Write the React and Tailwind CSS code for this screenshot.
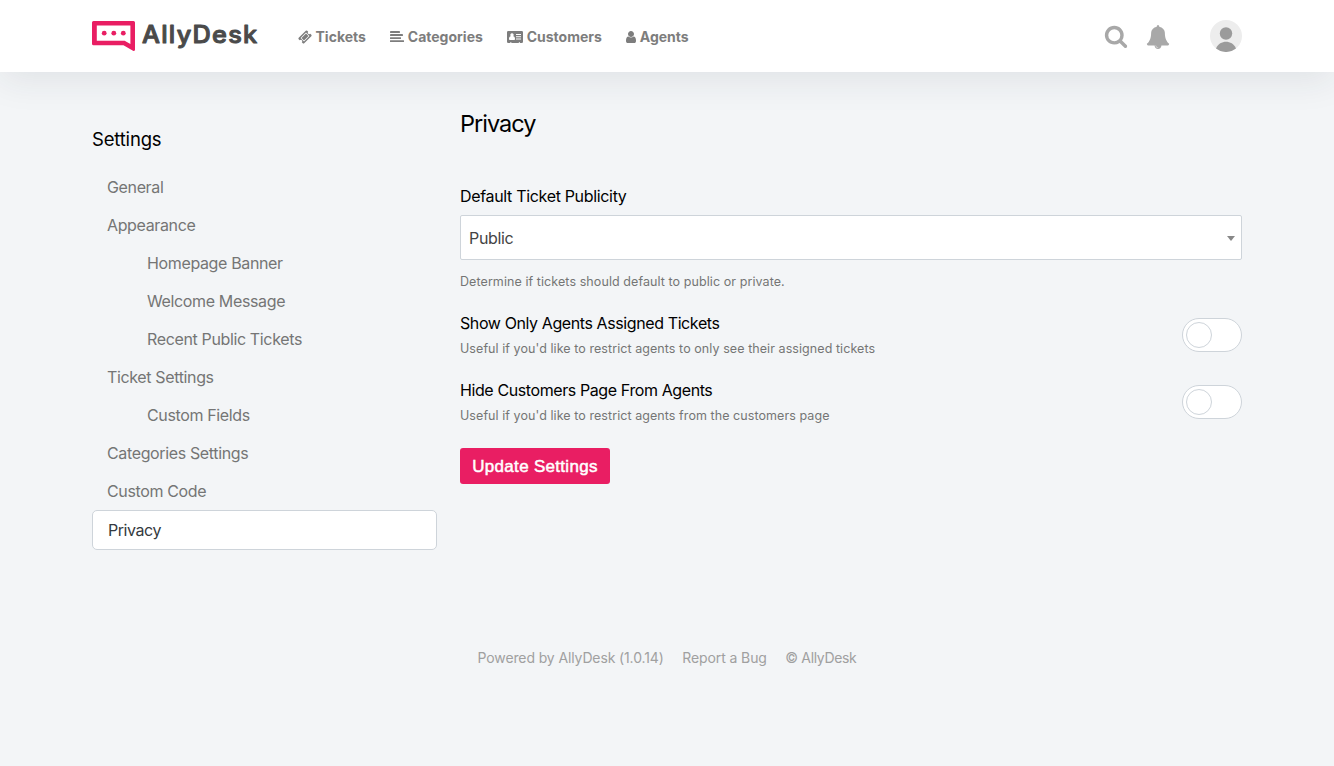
import React from "react";

const PATHS = {
  search:
    "M1216 832q0-185-131.5-316.5t-316.5-131.5-316.5 131.5-131.5 316.5 131.5 316.5 316.5 131.5 316.5-131.5 131.5-316.5zm512 832q0 52-38 90t-90 38q-54 0-90-38l-343-342q-179 124-399 124-143 0-273.5-55.5t-225-150-150-225-55.5-273.5 55.5-273.5 150-225 225-150 273.5-55.5 273.5 55.5 225 150 150 225 55.5 273.5q0 220-124 399l343 343q37 37 37 90z",
  bell: "M912 1696q0-16-16-16-59 0-101.5-42.5t-42.5-101.5q0-16-16-16t-16 16q0 73 51.5 124.5t124.5 51.5q16 0 16-16zm816-288q0 52-38 90t-90 38h-448q0 106-75 181t-181 75-181-75-75-181h-448q-52 0-90-38t-38-90q50-42 91-88t85-119.5 74.5-158.5 50-206 19.5-260q0-152 117-282.5t307-158.5q-8-19-8-39 0-40 28-68t68-28 68 28 28 68q0 20-8 39 190 28 307 158.5t117 282.5q0 139 19.5 260t50 206 74.5 158.5 85 119.5 91 88z",
  ticket:
    "M1024 452l316 316-572 572-316-316zm-211 979l618-618q19-19 19-45t-19-45l-362-362q-18-18-45-18t-45 18l-618 618q-19 19-19 45t19 45l362 362q18 18 45 18t45-18zm889-637l-907 908q-37 37-90.5 37t-90.5-37l-126-126q56-56 56-136t-56-136-136-56-136 56l-125-126q-37-37-37-90.5t37-90.5l907-906q37-37 90.5-37t90.5 37l125 125q-56 56-56 136t56 136 136 56 136-56l126 125q37 37 37 90.5t-37 90.5z",
  user: "M1536 1399q0 109-62.5 187t-150.5 78h-854q-88 0-150.5-78t-62.5-187q0-85 8.5-160.5t31.5-152 58.5-131 94-89 134.5-34.5q131 128 313 128t313-128q76 0 134.5 34.5t94 89 58.5 131 31.5 152 8.5 160.5zm-256-887q0 159-112.5 271.5t-271.5 112.5-271.5-112.5-112.5-271.5 112.5-271.5 271.5-112.5 271.5 112.5 112.5 271.5z",
};

function Logo() {
  return (
    <svg width="170" height="40" viewBox="0 0 170 40" className="block overflow-visible">
      <path
        fillRule="evenodd"
        fill="#e91e63"
        d="M1.5 5H41.5A1.5 1.5 0 0 1 43 6.5V33.6Q43 35.7 41 34.8L31.5 29.3H1.5A1.5 1.5 0 0 1 0 27.8V6.5A1.5 1.5 0 0 1 1.5 5ZM4.8 9.5V24.8H32.6L38.4 28V9.5Z"
      />
      <g fill="#e91e63">
        <circle cx="12.2" cy="17.2" r="2.4" />
        <circle cx="21.8" cy="17.2" r="2.4" />
        <circle cx="31.3" cy="17.2" r="2.4" />
      </g>
      <text
        x="50"
        y="27.2"
        textLength="116.5"
        lengthAdjust="spacingAndGlyphs"
        letterSpacing="1.2"
        fontFamily="Inter, sans-serif"
        fontWeight="500"
        fontSize="24"
        fill="#4a4a4a"
        stroke="#4a4a4a"
        strokeWidth="1"
        strokeLinejoin="round"
      >
        AllyDesk
      </text>
    </svg>
  );
}

const NAV = [
  {
    label: "Tickets",
    icon: (
      <svg width="14" height="14" viewBox="0 0 1792 1792" fill="currentColor">
        <path d={PATHS.ticket} />
      </svg>
    ),
  },
  {
    label: "Categories",
    icon: (
      <svg width="14" height="14" viewBox="0 0 14 14" fill="currentColor">
        <rect x="0" y="1" width="10" height="1.9" rx="0.4" />
        <rect x="0" y="4.1" width="13" height="1.9" rx="0.4" />
        <rect x="0" y="7.2" width="11" height="1.9" rx="0.4" />
        <rect x="0" y="10.2" width="14" height="1.9" rx="0.4" />
      </svg>
    ),
  },
  {
    label: "Customers",
    icon: (
      <svg width="16" height="14" viewBox="0 0 16 14" fill="currentColor">
        <path
          fillRule="evenodd"
          d="M1.2 1H14.8A1.2 1.2 0 0 1 16 2.2V11.8A1.2 1.2 0 0 1 14.8 13H13V12.3H11.8V13H4.4V12.3H3.2V13H1.2A1.2 1.2 0 0 1 0 11.8V2.2A1.2 1.2 0 0 1 1.2 1ZM5 3.2A1.6 1.75 0 0 0 3.8 6.2C2.4 6.4 2 7.6 2 9Q2 10 2.8 10H7.2Q8 10 8 9C8 7.6 7.6 6.4 6.2 6.2A1.6 1.75 0 0 0 5 3.2ZM9 4V5H14V4ZM9 6.2V7.2H14V6.2ZM9 8.5V9.5H14V8.5Z"
        />
      </svg>
    ),
  },
  {
    label: "Agents",
    icon: (
      <svg width="10" height="14" viewBox="256 0 1280 1792" fill="currentColor">
        <path d={PATHS.user} />
      </svg>
    ),
  },
];

const MENU = [
  { label: "General" },
  { label: "Appearance" },
  { label: "Homepage Banner", nested: true },
  { label: "Welcome Message", nested: true },
  { label: "Recent Public Tickets", nested: true },
  { label: "Ticket Settings" },
  { label: "Custom Fields", nested: true },
  { label: "Categories Settings" },
  { label: "Custom Code" },
];

function Header() {
  return (
    <header className="relative h-[72px] bg-white shadow-[0_8px_36px_rgba(35,45,60,0.09)]">
      <div className="mx-auto flex h-full w-[1150px] items-center">
        <Logo />
        <nav className="ml-9 flex items-center gap-[24.4px] pt-0.5 text-sm leading-5 font-bold text-[#7d7d7d]">
          {NAV.map((item) => (
            <a key={item.label} className="flex items-center gap-[3.5px]">
              {item.icon}
              <span>{item.label}</span>
            </a>
          ))}
        </nav>
        <div className="ml-auto flex items-center text-[#a8a8a8]">
          <svg width="24" height="24" viewBox="0 0 1792 1792" fill="currentColor" className="mr-[18.5px]">
            <path d={PATHS.search} />
          </svg>
          <svg width="24" height="24" viewBox="0 0 1792 1792" fill="currentColor" className="mr-10 translate-y-px">
            <path d={PATHS.bell} />
          </svg>
          <svg width="32" height="32" viewBox="0 0 32 32">
            <circle cx="16" cy="16" r="16" fill="#ededed" />
            <circle cx="16" cy="13.5" r="6.2" fill="#9b9b9b" />
            <path d="M6 28.5C8 23.8 12 21.8 16 21.8S24 23.8 26 28.5A16 16 0 0 1 6 28.5Z" fill="#9b9b9b" />
          </svg>
        </div>
      </div>
    </header>
  );
}

function Toggle() {
  return (
    <div className="flex h-[34px] w-[60px] items-center rounded-full border border-[#ced4da] bg-white px-[3px]">
      <div className="size-[26px] rounded-full border border-[#ced4da] bg-white" />
    </div>
  );
}

function ToggleRow({ title, hint }) {
  return (
    <div className="flex h-[67px] justify-between">
      <div>
        <div className="text-base leading-6 tracking-[-0.4px] text-black">{title}</div>
        <div className="mt-1 text-[12.5px] leading-5 tracking-[0.07px] text-[#757575]">{hint}</div>
      </div>
      <div className="pt-[7px]">
        <Toggle />
      </div>
    </div>
  );
}

export default function App() {
  return (
    <div className="min-h-screen bg-[#f3f5f7] font-['Inter',sans-serif]">
      <Header />
      <main className="mx-auto flex w-[1150px] gap-[23px]">
        <aside className="w-[345px] pt-[54px]">
          <h2 className="mb-[15px] text-[18.5px] leading-[27px] tracking-[-0.18px] text-black">Settings</h2>
          <ul className="text-base tracking-[-0.36px] text-[#757575]">
            {MENU.map((item) => (
              <li
                key={item.label}
                className={item.nested ? "flex h-[38px] items-center pl-[55px]" : "flex h-[38px] items-center pl-[15px]"}
              >
                {item.label}
              </li>
            ))}
            <li className="flex h-10 items-center rounded-[5px] border border-[#ced4da] bg-white pl-[15px] tracking-[-0.45px] text-[#343a40]">
              Privacy
            </li>
          </ul>
        </aside>
        <section className="w-[782px] pt-9">
          <h1 className="text-[23.5px] leading-8 tracking-[-1px] text-black">Privacy</h1>
          <div className="mt-11 text-base leading-6 tracking-[-0.33px] text-black">Default Ticket Publicity</div>
          <div className="mt-[7px] flex h-[45px] items-center justify-between rounded-[2px] border border-[#ced4da] bg-white pr-1.5 pl-2 text-base tracking-[-0.33px] text-[#444]">
            <span>Public</span>
            <svg width="8" height="5" viewBox="0 0 8 5" className="translate-y-px">
              <path d="M0 0H8L4 5Z" fill="#888" />
            </svg>
          </div>
          <div className="mt-3 mb-[19px] text-[12.5px] leading-5 tracking-[0.08px] text-[#757575]">
            Determine if tickets should default to public or private.
          </div>
          <ToggleRow
            title="Show Only Agents Assigned Tickets"
            hint="Useful if you'd like to restrict agents to only see their assigned tickets"
          />
          <ToggleRow
            title="Hide Customers Page From Agents"
            hint="Useful if you'd like to restrict agents from the customers page"
          />
          <button className="mt-[3px] flex h-9 w-[150px] items-center justify-center rounded-[3px] bg-[#e91e63] pt-0.5 font-['Liberation_Sans',Arial,sans-serif] text-[17px] tracking-[0.3px] whitespace-nowrap text-white [-webkit-text-stroke:0.5px_white]">
            Update Settings
          </button>
        </section>
      </main>
      <footer className="mt-[98px] flex justify-center gap-[18.5px] text-sm leading-5 text-[#a0a0a0]">
        <span className="tracking-[-0.12px]">Powered by AllyDesk (1.0.14)</span>
        <span className="tracking-[-0.1px]">Report a Bug</span>
        <span className="tracking-[-0.34px]">© AllyDesk</span>
      </footer>
    </div>
  );
}
